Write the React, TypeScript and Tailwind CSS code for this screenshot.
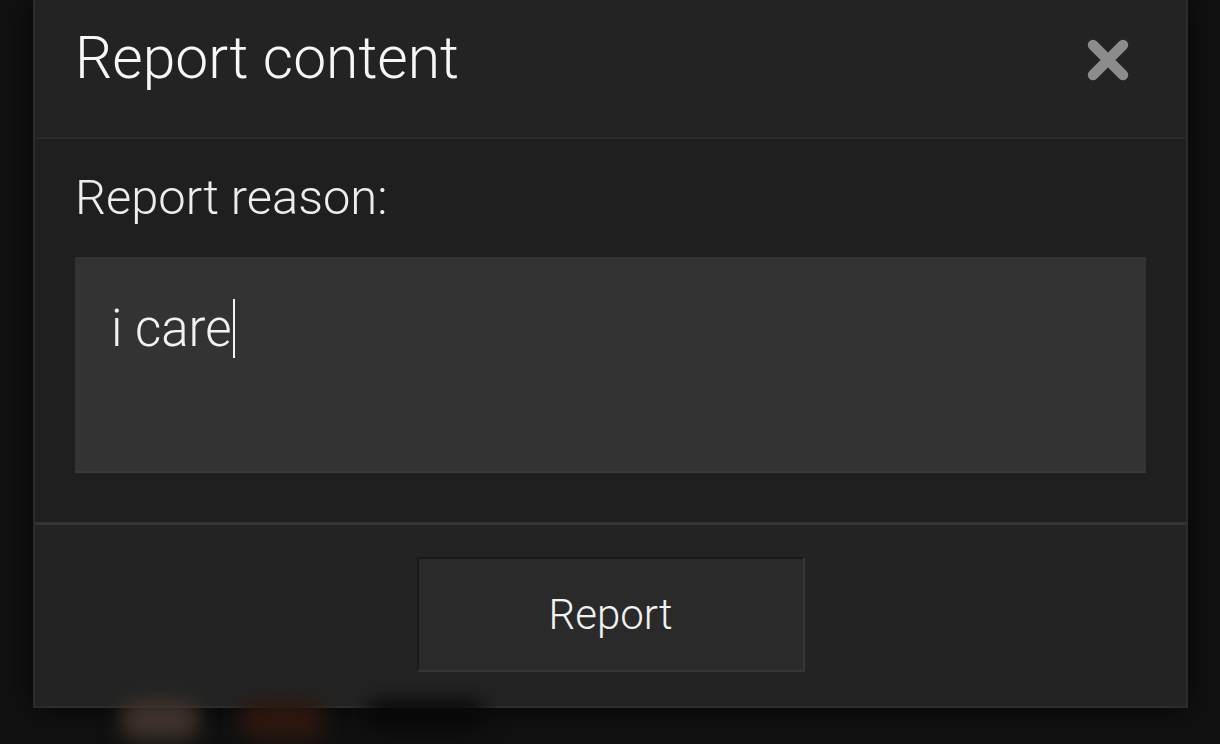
import React from 'react';

const CloseIcon = () => (
  <svg width="42" height="42" viewBox="0 0 42 42" className="block">
    <path d="M6 6 L36 36 M36 6 L6 36" stroke="#8c8c8c" strokeWidth="10.5" strokeLinecap="round" fill="none" />
  </svg>
);

const App = () => {
  return (
    <div
      className="w-[1220px] h-[744px] overflow-hidden bg-[#111111] flex flex-col"
      style={{ fontFamily: 'Roboto, "Noto Sans", sans-serif' }}
    >
      <div className="ml-[33px] w-[1155px] shrink-0 border-x-2 border-b-2 border-[#2c2c2c] bg-[#232323] shadow-[0_0_30px_rgba(0,0,0,0.7)] flex flex-col">
        {/* Header */}
        <header className="h-[139px] flex items-center justify-between pl-[40px] pr-[57px] border-b-2 border-[#2a2a2a]">
          <h1 className="text-[58.8px] font-light leading-none text-[#f7f7f7] mb-[20px]">Report content</h1>
          <button className="mb-[18px]">
            <CloseIcon />
          </button>
        </header>

        {/* Body */}
        <div className="bg-[#1f1f1f] pl-[40px] pr-[40px] pt-[31px] pb-[49px]">
          <p className="text-[48.8px] font-light leading-[56px] text-[#ededed]">Report reason:</p>
          <div className="mt-[31px] h-[216px] bg-[#333333] border-b-2 border-[#3a3a3a] pl-[36px] pt-[41px]">
            <div className="flex items-center h-[60px] text-[51px] font-light text-[#f2f2f2] leading-none">
              <span>i care</span>
              <span className="ml-[1px] w-[2px] h-[59px] bg-[#f2f2f2]" />
            </div>
          </div>
        </div>

        {/* Footer */}
        <div className="border-t-[3px] border-[#353535] pt-[32px] pb-[34px] flex justify-center">
          <button className="w-[388px] h-[115px] bg-[#2a2a2a] border-2 border-t-[#1a1a1a] border-l-[#1a1a1a] border-b-[#363636] border-r-[#363636] text-[42px] font-light text-[#f2f2f2]">
            Report
          </button>
        </div>
      </div>

      {/* blurred page behind */}
      <div className="flex gap-[40px] pl-[120px] -mt-[8px]">
        <div className="w-[80px] h-[40px] rounded-full bg-[#3f332b] blur-[10px]" />
        <div className="w-[85px] h-[40px] rounded-full bg-[#2c170e] blur-[10px]" />
        <div className="w-[120px] h-[30px] rounded-full bg-[#080808] blur-[10px]" />
      </div>
    </div>
  );
};

export default App;
